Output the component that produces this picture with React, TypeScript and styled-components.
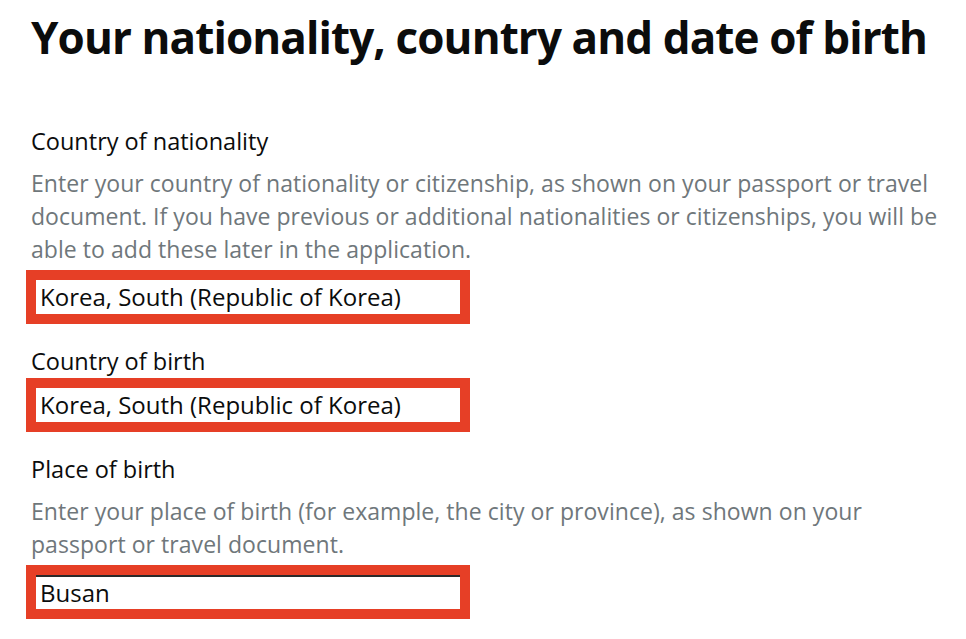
import styled, { createGlobalStyle } from 'styled-components'

const GlobalStyle = createGlobalStyle`
  html, body {
    margin: 0;
    padding: 0;
    background: #ffffff;
  }
  body {
    font-family: "Open Sans", "Liberation Sans", Arial, sans-serif;
    color: #0b0c0c;
  }
`

const Page = styled.main`
  padding: 11px 0 0 31px;
  width: 935px;
`

const Title = styled.h1`
  font-size: 44px;
  line-height: 52px;
  font-weight: 700;
  letter-spacing: -0.9px;
  white-space: nowrap;
  margin: 0 0 63px;
`

const Field = styled.div`
  display: flex;
  flex-direction: column;
  margin-bottom: 22px;
`

const Label = styled.label`
  font-size: 23.5px;
  line-height: 30px;
  margin-bottom: 2px;
`

const Hint = styled.div`
  font-size: 23px;
  line-height: 33px;
  letter-spacing: 0.05px;
  color: #6f777b;
  margin: 9px 0 4px;
`

const HintLine = styled.span`
  display: block;
  white-space: nowrap;
`

const Highlight = styled.div`
  margin-left: -5px;
  width: 424px;
  border: 10px solid #e63f26;
`

const Input = styled.div<{ $topLine?: boolean }>`
  height: 34px;
  box-sizing: border-box;
  padding: 0 4px;
  font-size: 24px;
  color: #0b0c0c;
  background: #fff;
  white-space: nowrap;
  border-top: ${(p) => (p.$topLine ? '2px solid #2a2a2a' : 'none')};
  line-height: ${(p) => (p.$topLine ? '32px' : '34px')};
`

export default function App() {
  return (
    <Page>
      <GlobalStyle />
      <Title>Your nationality, country and date of birth</Title>

      <Field>
        <Label>Country of nationality</Label>
        <Hint>
          <HintLine>Enter your country of nationality or citizenship, as shown on your passport or travel</HintLine>
          <HintLine>document. If you have previous or additional nationalities or citizenships, you will be</HintLine>
          <HintLine>able to add these later in the application.</HintLine>
        </Hint>
        <Highlight>
          <Input>Korea, South (Republic of Korea)</Input>
        </Highlight>
      </Field>

      <Field>
        <Label>Country of birth</Label>
        <Highlight>
          <Input>Korea, South (Republic of Korea)</Input>
        </Highlight>
      </Field>

      <Field>
        <Label>Place of birth</Label>
        <Hint>
          <HintLine>Enter your place of birth (for example, the city or province), as shown on your</HintLine>
          <HintLine>passport or travel document.</HintLine>
        </Hint>
        <Highlight>
          <Input $topLine>Busan</Input>
        </Highlight>
      </Field>
    </Page>
  )
}
